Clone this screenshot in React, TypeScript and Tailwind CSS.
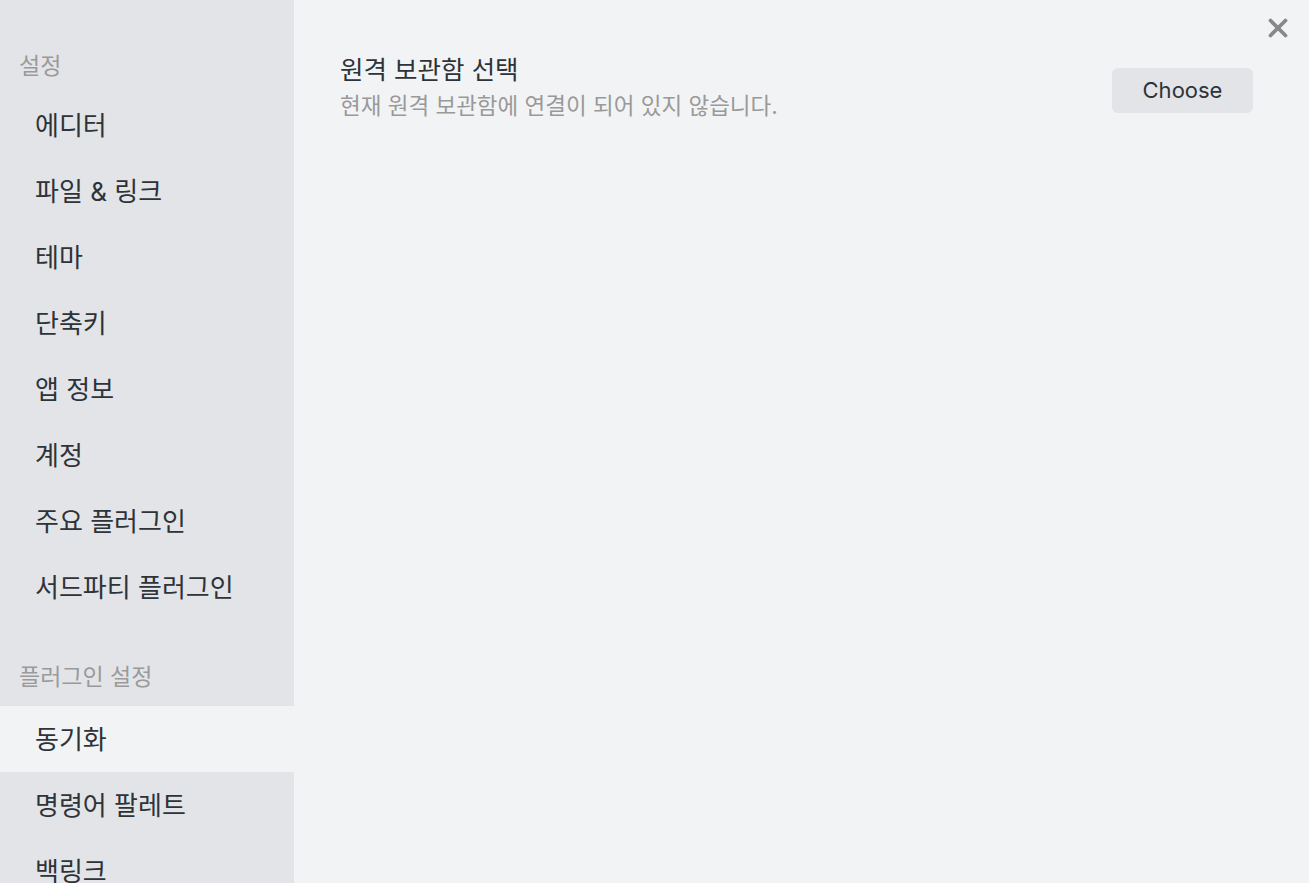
import { X } from 'lucide-react'

const coreItems = ['에디터', '파일 & 링크', '테마', '단축키', '앱 정보', '계정', '주요 플러그인', '서드파티 플러그인']
const pluginItems = ['동기화', '명령어 팔레트', '백링크']

function NavItem({ label, active }: { label: string; active?: boolean }) {
  return (
    <div
      className={`h-[66px] flex items-center pl-[35px] text-[26px] text-[#2e3338] ${
        active ? 'bg-[#f2f3f5]' : ''
      }`}
    >
      {label}
    </div>
  )
}

export default function App() {
  return (
    <div
      className="w-[1309px] h-[883px] flex overflow-hidden bg-[#f2f3f5]"
      style={{ fontFamily: '"Inter", "Noto Sans CJK KR", sans-serif' }}
    >
      {/* Sidebar */}
      <aside className="w-[294px] shrink-0 bg-[#e3e4e8] pt-[40px]">
        <div className="h-[52px] flex items-center pl-[19px] text-[23px] text-[#9a9a9a]">설정</div>
        {coreItems.map((item) => (
          <NavItem key={item} label={item} />
        ))}
        <div className="mt-[28px] h-[58px] flex items-center pl-[19px] text-[23px] text-[#9a9a9a]">
          플러그인 설정
        </div>
        {pluginItems.map((item) => (
          <NavItem key={item} label={item} active={item === '동기화'} />
        ))}
      </aside>

      {/* Content */}
      <main className="flex-1 relative pl-[46px] pr-[56px] pt-[53px]">
        <button className="absolute top-[9px] right-[12px] p-1 text-[#888888]">
          <X size={30} strokeWidth={3} />
        </button>
        <div className="flex items-start justify-between">
          <div className="flex flex-col gap-[4px]">
            <div className="text-[25.5px] text-[#2e3338] leading-[34px]">원격 보관함 선택</div>
            <div className="text-[22.5px] text-[#999999] leading-[30px]">현재 원격 보관함에 연결이 되어 있지 않습니다.</div>
          </div>
          <button className="mt-[15px] w-[141px] h-[45px] rounded-[6px] bg-[#e3e4e8] text-[22px] text-[#2e3338]">
            Choose
          </button>
        </div>
      </main>
    </div>
  )
}
